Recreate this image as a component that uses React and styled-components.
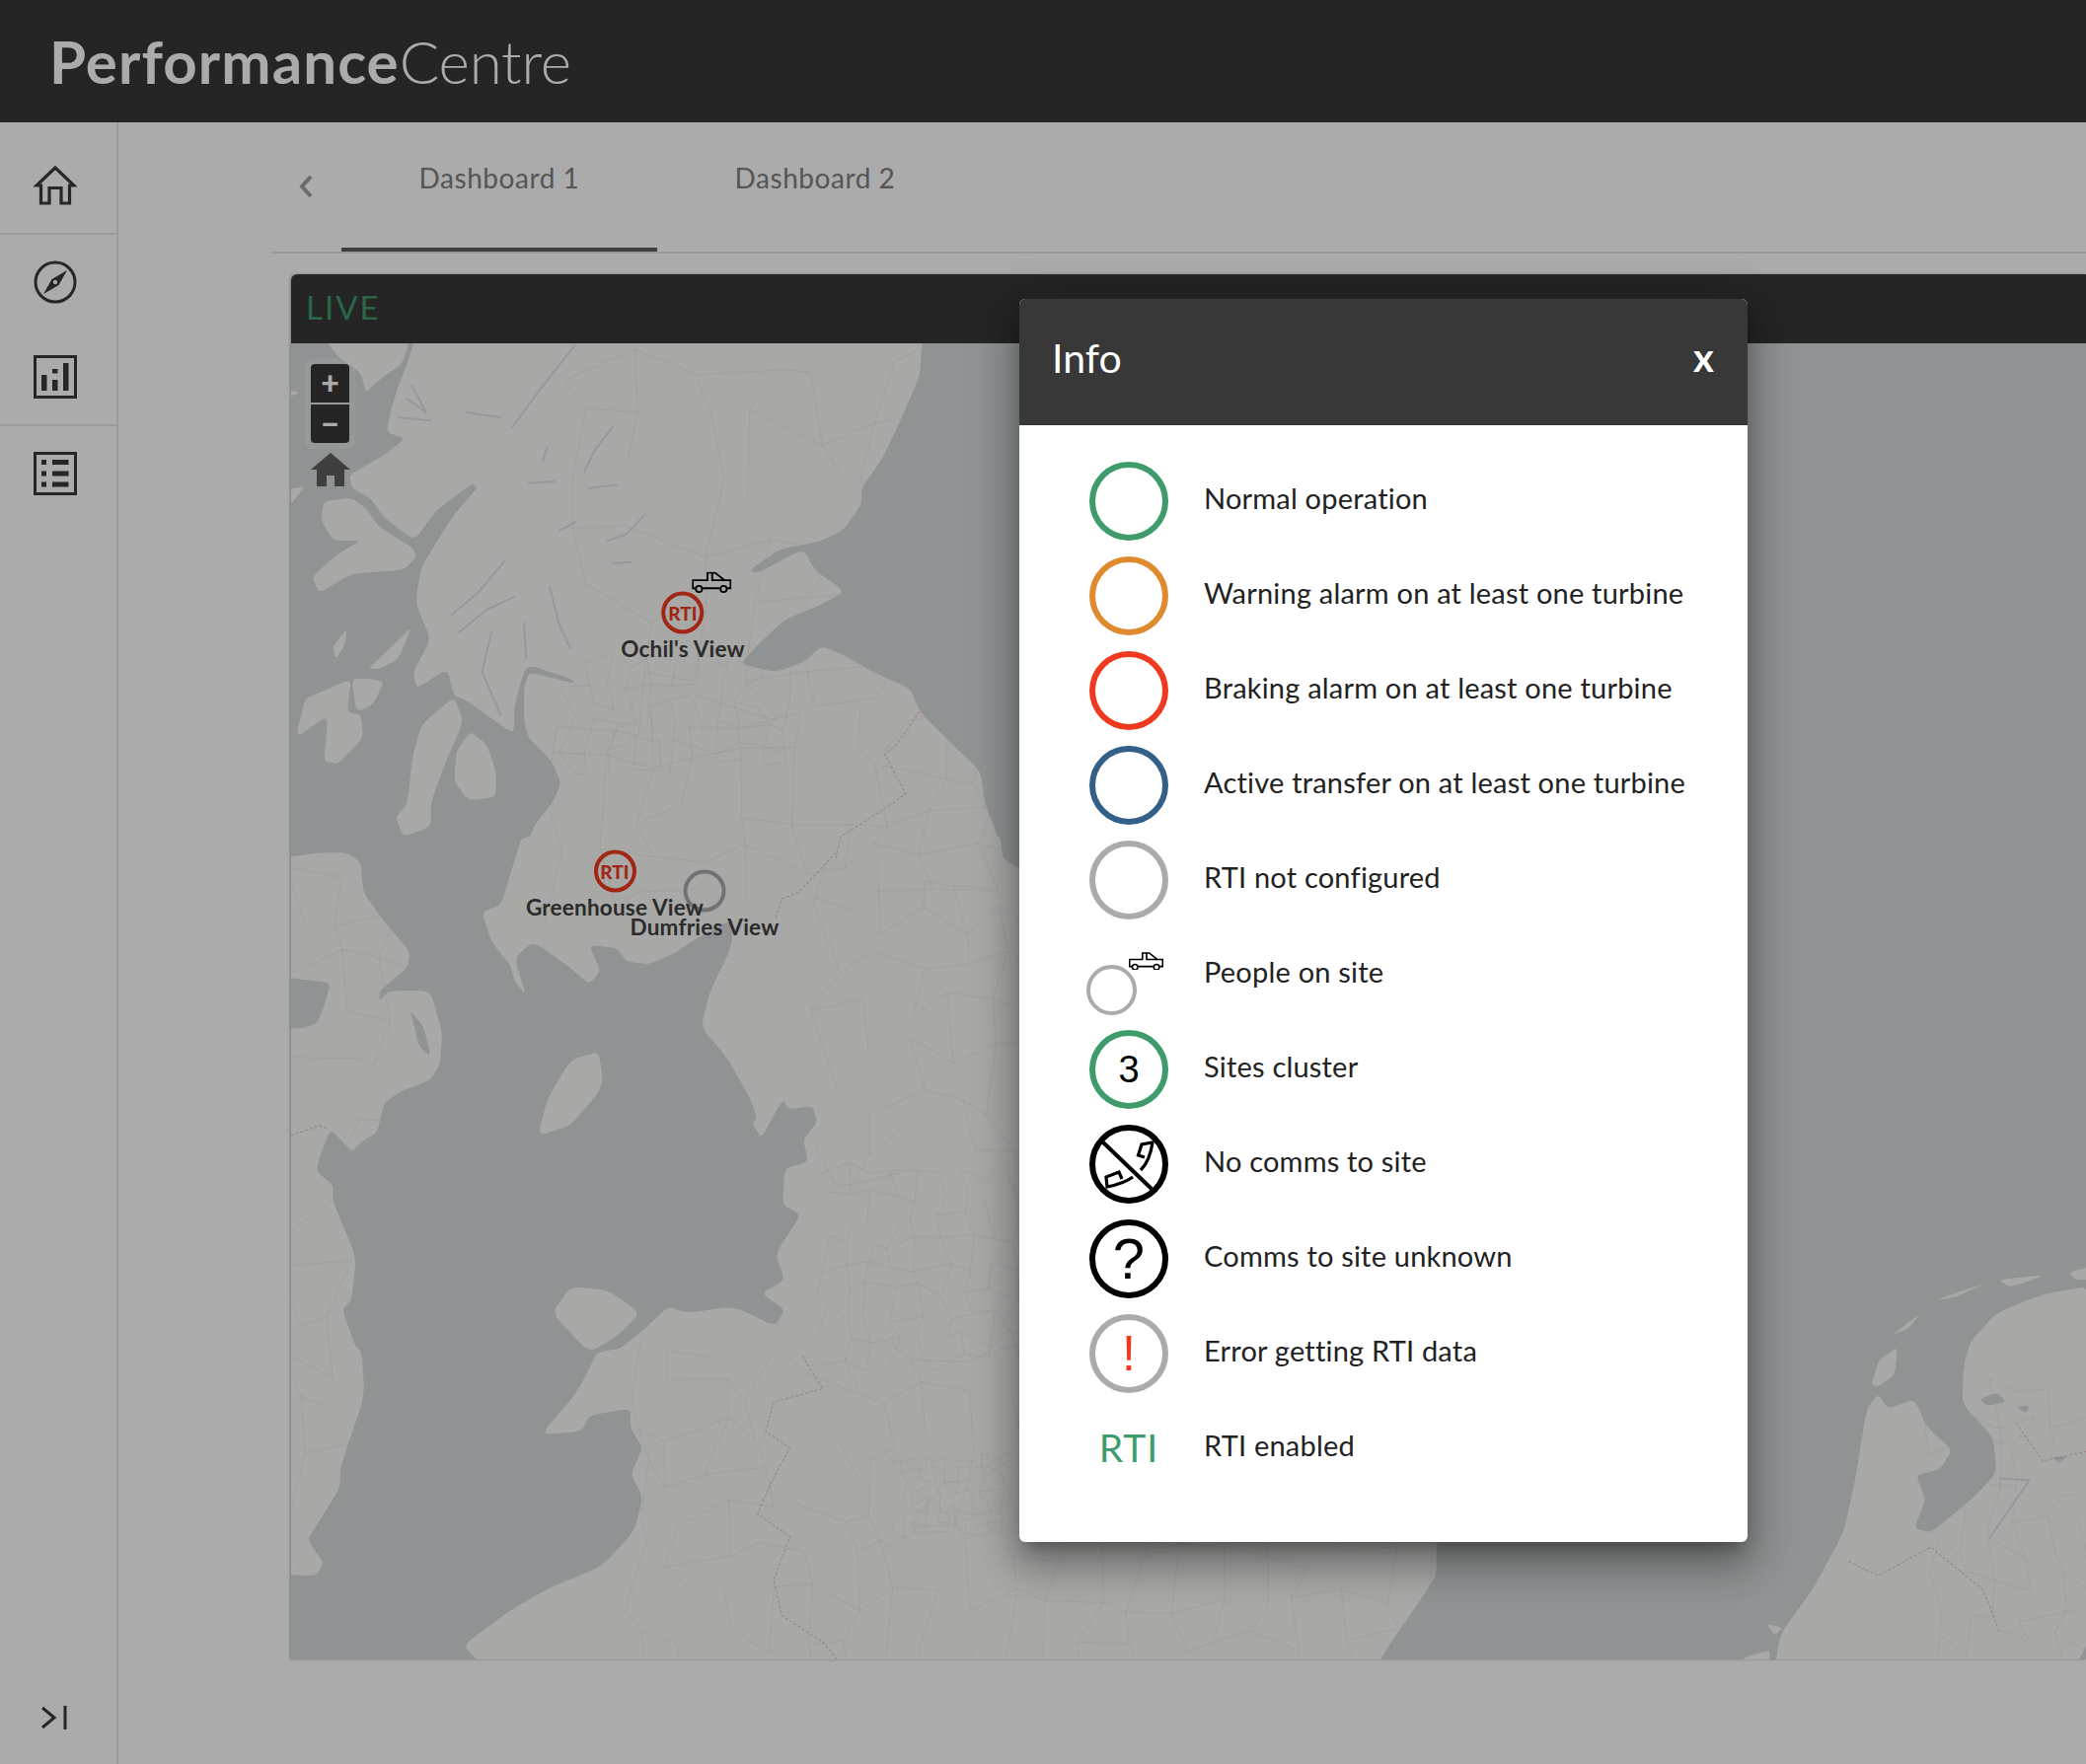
import React from 'react';
import styled, { createGlobalStyle } from 'styled-components';

const FONT = '"Lato", "Liberation Sans", sans-serif';

const GlobalStyle = createGlobalStyle`
  html, body { margin: 0; padding: 0; background: #fff; font-family: ${FONT}; }
  * { box-sizing: border-box; }
`;

const Page = styled.div`
  position: relative; width: 2114px; height: 1788px; overflow: hidden;
  display: flex; flex-direction: column; background: #fff;
`;

const TopBar = styled.header`
  height: 124px; flex: none; background: #383838; display: flex; align-items: center;
  padding: 0 0 0 50px; color: #fff; font-size: 60px; line-height: 1;
`;
const LogoBold = styled.span` font-weight: 700; letter-spacing: 1.1px; `;
const LogoLight = styled.span` font-weight: 300; letter-spacing: -0.2px; `;

const Body = styled.div` flex: 1; display: flex; min-height: 0; `;

const Sidebar = styled.nav`
  width: 120px; flex: none; display: flex; flex-direction: column;
  border-right: 2px solid #e6e6e6;
`;
const NavGroup = styled.div`
  padding-top: ${({ $pad }) => $pad || 0}px;
  border-bottom: ${({ $line }) => ($line ? '2px solid #e6e6e6' : 'none')};
`;
const NavItem = styled.div`
  height: 96px; display: flex; align-items: center; justify-content: center; padding-right: 6px;
  svg { display: block; }
`;
const Collapse = styled.div`
  margin-top: auto; height: 94px; display: flex; align-items: center; justify-content: center;
  padding-right: 8px;
`;

const Content = styled.main`
  flex: 1; min-width: 0; display: flex; flex-direction: column; padding: 0 0 106px 154px;
`;

const TabBar = styled.div`
  height: 133px; flex: none; display: flex; border-bottom: 2px solid #e6e6e6;
`;
const BackButton = styled.div`
  width: 72px; height: 129px; display: flex; align-items: center; justify-content: center;
`;
const Tab = styled.div`
  width: 320px; height: 131px; padding-top: 37px; text-align: center;
  font-size: 28px; line-height: 38px; color: #808080; letter-spacing: 0.55px;
  border-bottom: 4px solid ${({ $active }) => ($active ? '#5f5f5f' : 'transparent')};
`;

const Panel = styled.section`
  flex: 1; min-height: 0; margin: 21px 0 0 21px; display: flex; flex-direction: column;
  border-radius: 6px 0 0 0; overflow: hidden; box-shadow: -1px 0 3px rgba(0, 0, 0, 0.3);
`;
const PanelHead = styled.div`
  height: 70px; flex: none; background: #383838; display: flex; align-items: center;
  padding: 0 0 3px 15px;
`;
const LiveText = styled.span`
  color: #3f9a6c; font-size: 33px; font-weight: 400; letter-spacing: 2px; line-height: 1;
`;

const MapArea = styled.div` position: relative; flex: 1; background: #d5dbdb; overflow: hidden; `;
const MapSvg = styled.svg` position: absolute; left: 0; top: 0; width: 1819px; height: 1335px; display: block; `;

const ZoomBox = styled.div`
  position: absolute; left: 14px; top: 15px; padding: 6px; border-radius: 7px;
  display: flex; flex-direction: column; gap: 2px; background: rgba(255, 255, 255, 0.22);
`;
const ZoomBtn = styled.div`
  width: 39px; height: 39px; background: #383838; color: #fff; font-size: 32px; font-weight: 900;
  line-height: 37px; text-align: center;
  border-radius: ${({ $bottom }) => ($bottom ? '0 0 4px 4px' : '4px 4px 0 0')};
`;
const HomeControl = styled.div`
  position: absolute; left: 20px; top: 111px; svg { display: block; }
`;

const Marker = styled.div`
  position: absolute; left: ${({ $x }) => $x}px; top: ${({ $y }) => $y}px;
  transform: translate(-50%, -21.5px); display: flex; flex-direction: column; align-items: center;
`;
const MarkerDot = styled.div`
  position: relative; width: 43px; height: 43px; border-radius: 50%;
  border: 4.5px solid ${({ $color }) => $color}; background: rgba(255, 255, 255, 0.12);
  display: flex; align-items: center; justify-content: center;
  color: ${({ $color }) => $color}; font-size: 19px; font-weight: 900; line-height: 1;
`;
const TruckBadge = styled.div`
  position: absolute; left: ${({ $l }) => $l}px; top: ${({ $t }) => $t}px; svg { display: block; }
`;
const MarkerLabel = styled.div`
  margin-top: 3px; font-size: 22.5px; line-height: 24px; font-weight: 700; color: #404040;
  white-space: nowrap; letter-spacing: 0.2px;
`;

const Overlay = styled.div`
  position: absolute; inset: 0; background: rgba(0, 0, 0, 0.33);
  display: flex; align-items: flex-start; padding: 303px 0 0 1033px;
`;
const Dialog = styled.div`
  width: 738px; background: #fff; border-radius: 6px; overflow: hidden;
  box-shadow: 0 11px 15px -7px rgba(0, 0, 0, 0.3), 0 24px 38px 3px rgba(0, 0, 0, 0.2),
    0 9px 46px 8px rgba(0, 0, 0, 0.2);
`;
const DialogHead = styled.div`
  height: 128px; background: #383838; color: #fff; display: flex; align-items: center;
  justify-content: space-between; padding: 0 34px 10px 33px;
`;
const DialogTitle = styled.div` font-size: 41px; font-weight: 400; line-height: 1; `;
const CloseX = styled.div` font-size: 40px; font-weight: 700; line-height: 1; `;
const DialogBody = styled.div` padding: 28.5px 0 47px 71px; `;
const Row = styled.div`
  height: 96px; display: flex; align-items: center; gap: 36px;
`;
const IconSlot = styled.div`
  position: relative; width: 80px; height: 80px; flex: none;
  display: flex; align-items: center; justify-content: center;
  svg { display: block; }
`;
const Ring = styled.div`
  width: ${({ $size }) => $size || 80}px; height: ${({ $size }) => $size || 80}px; flex: none;
  border-radius: 50%; border: ${({ $w }) => $w || 6}px solid ${({ $color }) => $color};
  display: flex; align-items: center; justify-content: center;
  color: ${({ $ink }) => $ink || '#000'}; font-family: "Liberation Sans", sans-serif;
  font-size: ${({ $fs }) => $fs || 38}px; line-height: 1;
`;
const SmallRing = styled(Ring)`
  position: absolute; left: -3px; top: 30px;
`;
const RtiWord = styled.div`
  color: #3f9a6c; font-size: 39px; font-weight: 400; line-height: 1; letter-spacing: 1px;
`;
const RowText = styled.div`
  font-size: 29px; line-height: 36px; color: #222; padding-bottom: 6px; letter-spacing: 0.2px;
`;

const F10 = 'scale(.4719 .3333)';
const F11 = 'translate(0 513) scale(.4719 .3333)';
const F12 = 'translate(0 1023) scale(.829 .3333)';
const F9 = 'translate(1475 -77) scale(.3333 .968)';

const LAND = [
  [F10, '275,-60 1365,-60 1355,0 1350,100 1310,230 1270,350 1225,440 1225,490 1185,570 1130,605 1050,625 985,690 1000,700 1100,625 1125,690 1190,755 1130,800 1060,840 1000,920 965,975 1040,1000 1100,970 1140,920 1190,950 1250,1000 1330,1050 1350,1120 1420,1220 1480,1300 1490,1400 1510,1470 1530,1566 500,1566 520,1470 560,1400 580,1340 560,1270 510,1200 500,1150 500,1050 510,1000 610,1035 600,1020 505,975 480,1100 478,1180 465,1175 440,1150 375,1085 350,1070 335,990 270,1050 262,1000 300,900 270,800 270,760 280,680 310,610 350,520 400,440 390,425 310,510 265,600 200,530 170,470 130,440 125,400 200,340 245,290 205,270 215,200 230,130 250,60'],
  [F10, '60,-40 260,-40 240,60 190,110 160,150 150,90 100,40'],
  [F10, '-10,140 20,150 -10,165'],
  [F10, '-10,445 30,435 -10,505'],
  [F10, '70,480 130,470 160,500 190,560 260,620 270,650 240,690 130,700 60,760 45,710 100,640 150,600 90,600 65,540'],
  [F10, '120,870 90,920 95,960 115,920'],
  [F10, '260,860 210,930 165,990 190,990 230,960'],
  [F10, '130,1020 140,1120 175,1100 200,1030 170,1020'],
  [F10, '30,1080 10,1200 80,1130 70,1270 100,1280 155,1200 150,1130 120,1120 130,1020 65,1060'],
  [F10, '350,1075 280,1160 260,1260 250,1400 225,1440 240,1500 300,1470 300,1400 330,1280 370,1150'],
  [F10, '385,1180 355,1240 350,1330 380,1390 440,1380 440,1300 420,1220'],
  [F11, '500,-60 470,80 450,170 410,190 430,280 470,350 480,400 505,445 480,330 520,280 600,360 640,410 665,370 640,290 700,300 720,340 770,350 830,310 860,280 950,210 945,300 900,430 880,540 940,640 990,770 1000,820 990,830 1010,880 1055,760 1070,790 1120,780 1130,830 1100,880 1110,950 1060,970 1055,1080 1095,1110 1040,1230 1060,1310 1010,1350 1060,1400 1040,1450 950,1390 850,1410 810,1390 750,1470 660,1566 1700,1566 1700,120 1530,40 1520,-60'],
  [F11, '660,615 600,640 550,760 530,870 600,840 660,740 670,700'],
  [F11, '600,1330 680,1340 750,1410 700,1480 640,1530 560,1410'],
  [F11, '-40,30 60,10 120,10 150,40 155,130 200,220 255,310 250,360 190,430 190,460 210,430 300,430 325,560 320,650 300,700 230,740 200,770 185,860 150,890 130,920 85,850 60,940 55,980 90,1020 90,1070 140,1240 130,1370 110,1400 135,1500 160,1566 -40,1566'],
  [F12, '85,-30 90,130 60,350 60,410 30,530 20,570 40,640 30,680 -30,670 -30,-30'],
  [F12, '380,-30 350,120 305,250 355,240 365,190 415,170 415,230 430,290 415,370 430,440 420,540 380,650 320,710 270,780 210,890 230,940 240,1020 1320,1020 1330,940 1345,880 1370,790 1400,680 1400,580 1440,300 1440,-30'],
  [F9, '80,1490 100,1432 200,1385 295,1325 330,1270 365,1195 400,1180 430,1195 510,1185 550,1215 625,1238 590,1258 515,1265 545,1290 510,1320 560,1325 700,1285 760,1262 750,1225 655,1190 660,1150 680,1125 760,1095 900,1075 1060,1066 1060,1490'],
  [F9, '380,1170 400,1145 460,1130 450,1160 400,1172'],
  [F9, '440,1118 530,1095 490,1112'],
  [F9, '570,1082 730,1063 640,1078'],
  [F9, '765,1060 910,1055 800,1068'],
  [F9, '980,1052 1060,1045 1060,1060 1000,1060'],
  [F9, '60,1420 110,1425 85,1432'],
  [F9, '-10,1456 70,1448 70,1458 -10,1462'],
];

const WATER_SHAPES = [
  [F11, '-40,380 20,395 85,405 70,480 55,530 20,545 -40,540'],
  [F11, '255,490 285,540 300,630 275,600 265,540'],
  [F9, '710,1185 760,1178 790,1188 730,1192'],
  [F9, '820,1193 860,1192 850,1200'],
  [F9, '930,1246 975,1245 950,1252'],
];

const WATER_LINES = [
  [F10, '610,5 540,130 475,255'],
  [F10, '690,255 650,330 630,390'],
  [F10, '550,315 540,360'],
  [F10, '760,520 720,580 680,600'],
  [F10, '575,570 610,545'],
  [F10, '640,440 700,430'],
  [F10, '510,425 565,420'],
  [F10, '375,210 450,225'],
  [F10, '250,170 290,210 260,130'],
  [F10, '230,225 300,235'],
  [F10, '345,825 400,760 460,660'],
  [F10, '360,880 420,810 480,770'],
  [F10, '500,850 505,960'],
  [F10, '555,740 575,850 600,930'],
  [F10, '430,880 410,1000 450,1130'],
  [F10, '690,670 730,665'],
  [F9, '530,1185 660,1150'],
  [F9, '770,1268 860,1270 740,1330'],
];

const BORDER_LINES = [
  [F10, '1350,1120 1300,1220 1275,1250 1320,1370 1270,1420 1180,1500 1170,1566'],
  [F11, '1170,10 1090,130 1055,150 1040,210'],
  [F11, '0,870 60,840 80,850'],
  [F12, '625,10 650,110 590,150 580,240 610,290 590,380 570,490 610,560 590,690 600,800 650,880 670,940'],
  [F9, '310,1355 400,1370 560,1340 720,1385 770,1430'],
  [F9, '820,1210 900,1250 1032,1240'],
];

const ROAD_AREAS = [
  [300, 20, 640, 330, 60],
  [280, 320, 500, 410, 22],
  [270, 380, 740, 560, 48],
  [540, 540, 740, 850, 45],
  [540, 840, 740, 1020, 24],
  [350, 1020, 1300, 1335, 42],
  [610, 1130, 710, 1200, 11],
  [0, 530, 140, 1330, 50],
  [1660, 1060, 1819, 1335, 32],
];

// rounds only the corners of a "x,y x,y" outline so narrow inlets survive
const smooth = (points) => {
  const p = points.split(' ').map((s) => s.split(',').map(Number));
  const along = (a, b, t) => `${a[0] + (b[0] - a[0]) * t} ${a[1] + (b[1] - a[1]) * t}`;
  let d = '';
  p.forEach((pt, i) => {
    const prev = p[(i + p.length - 1) % p.length];
    const next = p[(i + 1) % p.length];
    d += `${i ? 'L' : 'M'}${along(pt, prev, 0.25)}Q${pt[0]} ${pt[1]} ${along(pt, next, 0.25)}`;
  });
  return `${d}Z`;
};

// fixed seed so the road network comes out the same on every render
const buildRoads = () => {
  let seed = 1337;
  const rnd = () => {
    seed = (seed * 16807) % 2147483647;
    return seed / 2147483647;
  };
  return ROAD_AREAS.map(([x0, y0, x1, y1, cell]) => {
    const cols = Math.ceil((x1 - x0) / cell);
    const rows = Math.ceil((y1 - y0) / cell);
    const pts = [];
    for (let r = 0; r <= rows; r += 1) {
      pts.push([]);
      for (let c = 0; c <= cols; c += 1) {
        pts[r].push([
          (x0 + c * cell + (rnd() - 0.5) * cell * 0.8).toFixed(1),
          (y0 + r * cell + (rnd() - 0.5) * cell * 0.8).toFixed(1),
        ]);
      }
    }
    let d = '';
    for (let r = 0; r <= rows; r += 1) {
      for (let c = 0; c <= cols; c += 1) {
        const p = pts[r][c];
        if (c < cols && rnd() < 0.6) d += `M${p}L${pts[r][c + 1]}`;
        if (r < rows && rnd() < 0.75) d += `M${p}L${pts[r + 1][c]}`;
      }
    }
    return d;
  }).join('');
};
const ROADS = buildRoads();

const GeoMap = () => (
  <MapSvg viewBox="0 0 1819 1335">
    <defs>
      <clipPath id="land">
        {LAND.map(([t, p], i) => <path key={i} transform={t} d={smooth(p)} />)}
      </clipPath>
    </defs>
    {LAND.map(([t, p], i) => <path key={i} transform={t} d={smooth(p)} fill="#fbfbf8" />)}
    <g clipPath="url(#land)">
      <path d={ROADS} fill="none" stroke="#000" strokeOpacity="0.05" strokeWidth="1" />
    </g>
    {WATER_SHAPES.map(([t, p], i) => <path key={i} transform={t} d={smooth(p)} fill="#d5dbdb" />)}
    {WATER_LINES.map(([t, p], i) => <polyline key={i} transform={t} points={p} fill="none" stroke="#d5dbdb" strokeOpacity="0.7" strokeWidth="2" strokeLinecap="round" strokeLinejoin="round" vectorEffect="non-scaling-stroke" />)}
    {BORDER_LINES.map(([t, p], i) => <polyline key={i} transform={t} points={p} fill="none" stroke="#b8605a" strokeOpacity="0.3" strokeWidth="1.2" strokeDasharray="3 2" vectorEffect="non-scaling-stroke" />)}
  </MapSvg>
);

const HomeIcon = () => (
  <svg width="44" height="44" viewBox="0 0 44 44" fill="none" stroke="#3a3a3a" strokeWidth="3.2">
    <path d="M22 4 L3 22 H7.5 V40 H16 V24.5 H28 V40 H36.5 V22 H41 Z" />
  </svg>
);
const CompassIcon = () => (
  <svg width="44" height="44" viewBox="0 0 44 44" fill="none">
    <circle cx="22" cy="22" r="20" stroke="#3a3a3a" strokeWidth="3" />
    <path d="M34 10 L25.5 25 L10 34 L18.5 19 Z" fill="#3a3a3a" />
    <circle cx="22" cy="22" r="2.2" fill="#fff" />
  </svg>
);
const BarsIcon = () => (
  <svg width="44" height="44" viewBox="0 0 44 44" fill="#3a3a3a">
    <rect x="1.5" y="1.5" width="41" height="41" fill="none" stroke="#3a3a3a" strokeWidth="3" />
    <rect x="8" y="20" width="5.5" height="16" />
    <rect x="19" y="14" width="5.5" height="4.5" />
    <rect x="19" y="25" width="5.5" height="11" />
    <rect x="30" y="8" width="5.5" height="28" />
  </svg>
);
const ListIcon = () => (
  <svg width="44" height="44" viewBox="0 0 44 44" fill="#3a3a3a">
    <rect x="1.5" y="1.5" width="41" height="41" fill="none" stroke="#3a3a3a" strokeWidth="3" />
    <rect x="8" y="8" width="5" height="5" />
    <rect x="19" y="8" width="16.5" height="5" />
    <rect x="8" y="19.5" width="5" height="5" />
    <rect x="19" y="19.5" width="16.5" height="5" />
    <rect x="8" y="30.5" width="5" height="5" />
    <rect x="19" y="30.5" width="16.5" height="5" />
  </svg>
);
const CollapseIcon = () => (
  <svg width="28" height="24" viewBox="0 0 28 24" fill="none" stroke="#383838" strokeWidth="3">
    <path d="M2 2 L14 12 L2 22" />
    <path d="M25 0 V24" />
  </svg>
);
const BackIcon = () => (
  <svg width="16" height="24" viewBox="0 0 16 24" fill="none" stroke="#a0a0a0" strokeWidth="4">
    <path d="M13 2 L4 12 L13 22" />
  </svg>
);
const MapHomeIcon = () => (
  <svg width="40" height="34" viewBox="0 0 40 34" fill="#5f5f5f">
    <path d="M20 0 L40 17 H34 V34 H24 V23 H16 V34 H6 V17 H0 Z" />
  </svg>
);
const TruckIcon = ({ width }) => (
  <svg width={width} height={width * 0.54} viewBox="0 0 107 58" fill="none" stroke="#000" strokeWidth="5">
    <path d="M9 45 H2 V23 H42 V3 H63 L88 23 H105 V45 H96 M76 45 H29" />
    <path d="M55 3 V23 H88" />
    <circle cx="19" cy="47" r="8.5" />
    <circle cx="86" cy="47" r="8.5" />
  </svg>
);
const NoCommsIcon = () => (
  <svg width="80" height="80" viewBox="0 0 80 80" fill="none" stroke="#000">
    <circle cx="40" cy="40" r="37" strokeWidth="6" />
    <path d="M14 18 L63 65" strokeWidth="4" />
    <path d="M52 46 C58 40 62 32 64 18 L53 20 L49.5 31 L56 33" strokeWidth="3.2" />
    <path d="M44 53 C36 59 28 61 18 63 L17 53 L30 48 L33 55" strokeWidth="3.2" />
  </svg>
);

const ROWS = [
  { text: 'Normal operation', icon: <Ring $color="#3f9a6c" /> },
  { text: 'Warning alarm on at least one turbine', icon: <Ring $color="#e08a2f" /> },
  { text: 'Braking alarm on at least one turbine', icon: <Ring $color="#f03a1f" /> },
  { text: 'Active transfer on at least one turbine', icon: <Ring $color="#336089" /> },
  { text: 'RTI not configured', icon: <Ring $color="#ababab" /> },
  {
    text: 'People on site',
    icon: (
      <>
        <SmallRing $color="#ababab" $size={51} $w={4} />
        <TruckBadge $l={40} $t={17}><TruckIcon width={35} /></TruckBadge>
      </>
    ),
  },
  { text: 'Sites cluster', icon: <Ring $color="#3f9a6c">3</Ring> },
  { text: 'No comms to site', icon: <NoCommsIcon /> },
  { text: 'Comms to site unknown', icon: <Ring $color="#000" $fs={58}>?</Ring> },
  { text: 'Error getting RTI data', icon: <Ring $color="#ababab" $ink="#f03a1f" $fs={50}>!</Ring> },
  { text: 'RTI enabled', icon: <RtiWord>RTI</RtiWord> },
];

const SITES = [
  { x: 397, y: 273, name: "Ochil's View", color: '#f03a1f', rti: true, truck: true },
  { x: 419, y: 555, name: 'Dumfries View', color: '#ababab' },
  { x: 328, y: 535, name: 'Greenhouse View', color: '#f03a1f', rti: true },
];

const App = () => (
  <Page>
    <GlobalStyle />
    <TopBar>
      <LogoBold>Performance</LogoBold>
      <LogoLight>Centre</LogoLight>
    </TopBar>
    <Body>
      <Sidebar>
        <NavGroup $pad={16} $line><NavItem><HomeIcon /></NavItem></NavGroup>
        <NavGroup $line>
          <NavItem><CompassIcon /></NavItem>
          <NavItem><BarsIcon /></NavItem>
        </NavGroup>
        <NavGroup><NavItem><ListIcon /></NavItem></NavGroup>
        <Collapse><CollapseIcon /></Collapse>
      </Sidebar>
      <Content>
        <TabBar>
          <BackButton><BackIcon /></BackButton>
          <Tab $active>Dashboard 1</Tab>
          <Tab>Dashboard 2</Tab>
        </TabBar>
        <Panel>
          <PanelHead><LiveText>LIVE</LiveText></PanelHead>
          <MapArea>
            <GeoMap />
            <ZoomBox>
              <ZoomBtn>+</ZoomBtn>
              <ZoomBtn $bottom>−</ZoomBtn>
            </ZoomBox>
            <HomeControl><MapHomeIcon /></HomeControl>
            {SITES.map((s) => (
              <Marker key={s.name} $x={s.x} $y={s.y}>
                <MarkerDot $color={s.color}>
                  {s.rti && 'RTI'}
                  {s.truck && <TruckBadge $l={27} $t={-24}><TruckIcon width={40} /></TruckBadge>}
                </MarkerDot>
                <MarkerLabel>{s.name}</MarkerLabel>
              </Marker>
            ))}
          </MapArea>
        </Panel>
      </Content>
    </Body>
    <Overlay>
      <Dialog>
        <DialogHead>
          <DialogTitle>Info</DialogTitle>
          <CloseX>x</CloseX>
        </DialogHead>
        <DialogBody>
          {ROWS.map((r) => (
            <Row key={r.text}>
              <IconSlot>{r.icon}</IconSlot>
              <RowText>{r.text}</RowText>
            </Row>
          ))}
        </DialogBody>
      </Dialog>
    </Overlay>
  </Page>
);

export default App;
